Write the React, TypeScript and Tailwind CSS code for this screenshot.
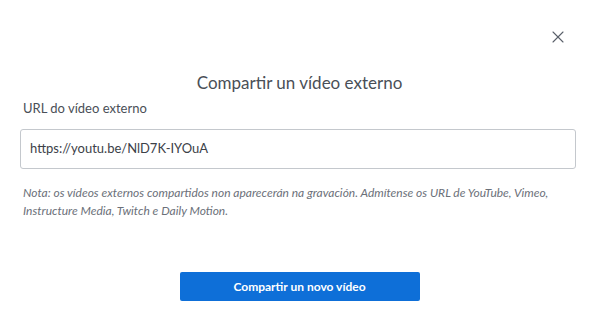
import { X } from "lucide-react";

export default function App() {
  return (
    <div
      className="w-[599px] h-[321px] bg-white relative overflow-hidden text-[#4a4f57]"
      style={{ fontFamily: "Lato, 'Noto Sans', sans-serif" }}
    >
      <button className="absolute left-[548px] top-[27px] text-[#5a606a]">
        <X className="w-[20px] h-[20px]" strokeWidth={1.3} />
      </button>
      <div className="px-[20px] pt-[72px]">
        <h2 className="text-center text-[17px] leading-[22px] text-[#4a4f57]">Compartir un vídeo externo</h2>
        <label className="block mt-[5px] pl-[3px] text-[13px] leading-[18px] text-[#4a4f57]">URL do vídeo externo</label>
        <div className="mt-[12px] w-[556px] h-[40px] border border-[#c4c8cd] rounded-[3px] flex items-center px-[9px] text-[13px] text-[#3c4148]">
          https://youtu.be/NlD7K-IYOuA
        </div>
        <p className="mt-[15px] pl-[3px] text-[12px] leading-[18px] italic text-[#6b7079] w-[540px]">
          Nota: os vídeos externos compartidos non aparecerán na gravación. Admítense os URL de YouTube, Vimeo, Instructure Media, Twitch e Daily Motion.
        </p>
        <div className="flex justify-center mt-[52px]">
          <button className="w-[240px] h-[29px] rounded-[2px] bg-[#0e6fd8] text-white text-[12px] font-bold">
            Compartir un novo vídeo
          </button>
        </div>
      </div>
    </div>
  );
}
